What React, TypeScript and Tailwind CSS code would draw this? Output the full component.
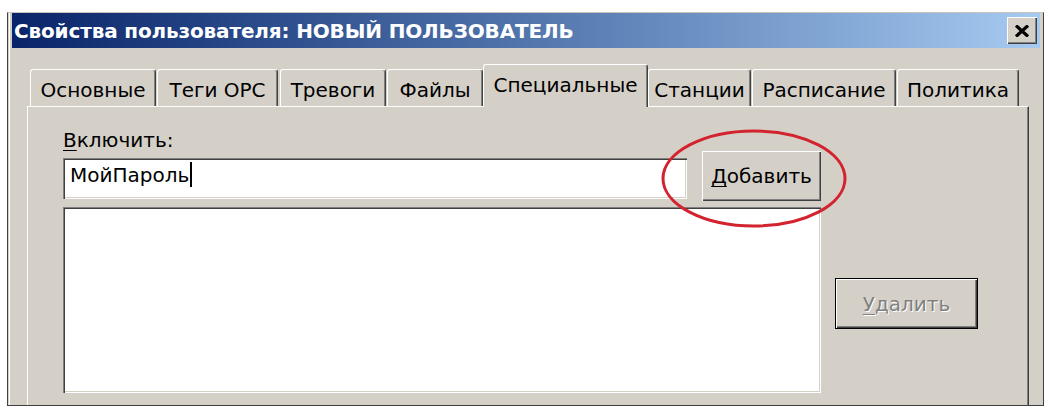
import React from "react";

type TabProps = {
  label: string;
  w: string;
  ml: string;
  active?: boolean;
};

function Tab({ label, w, ml, active }: TabProps) {
  if (active) {
    return (
      <div
        className={`${w} ${ml} relative z-10 -mb-[1px] h-[43px] rounded-t-[3px] border-t border-l border-white border-r border-r-[#404040] bg-[#d4d0c8] pt-[8px] text-center shadow-[inset_-1px_0_0_#808080]`}
      >
        {label}
      </div>
    );
  }
  return (
    <div
      className={`${w} ${ml} h-[37px] rounded-t-[3px] border-t border-l border-white border-r border-r-[#404040] bg-[#d4d0c8] pt-[8px] text-center shadow-[inset_-1px_0_0_#808080]`}
    >
      {label}
    </div>
  );
}

export default function App() {
  return (
    <div className="w-[1052px] h-[412px] bg-white pl-[7px] pt-[12px] font-['DejaVu_Sans',sans-serif] text-[20px] leading-[24px] text-black">
      {/* window */}
      <div className="flex h-[394px] w-[1037px] flex-col border border-[#404040] border-t-[#c8c4bc] bg-[#d4d0c8] shadow-[inset_1px_0_0_#d4d0c8,inset_2px_0_0_#ffffff]">
        {/* title bar */}
        <div className="ml-[4px] flex h-[35px] w-[1028px] items-center justify-between bg-gradient-to-r from-[#0a246a] to-[#a6caf0] pl-[2px] pr-[3px]">
          <span className="text-[20px] font-bold tracking-[-0.15px] text-white">
            Свойства пользователя: НОВЫЙ ПОЛЬЗОВАТЕЛЬ
          </span>
          <div className="flex h-[27px] w-[30px] items-center justify-center bg-[#d4d0c8] shadow-[inset_1px_1px_0_#ffffff,inset_-1px_-1px_0_#404040,inset_-2px_-2px_0_#808080]">
            <svg width="16" height="12" viewBox="0 0 16 12">
              <path d="M2 0.5 L14 11.5 M14 0.5 L2 11.5" stroke="#000" strokeWidth="3.2" />
            </svg>
          </div>
        </div>

        {/* tabs */}
        <div className="flex h-[58px] items-end">
          <Tab label="Основные" w="w-[126px]" ml="ml-[22px]" />
          <Tab label="Теги OPC" w="w-[121px]" ml="ml-[1px]" />
          <Tab label="Тревоги" w="w-[106px]" ml="ml-[2px]" />
          <Tab label="Файлы" w="w-[96px]" ml="ml-[1px]" />
          <Tab label="Специальные" w="w-[165px]" ml="ml-0" active />
          <Tab label="Станции" w="w-[103px]" ml="ml-0" />
          <Tab label="Расписание" w="w-[144px]" ml="ml-[1px]" />
          <Tab label="Политика" w="w-[122px]" ml="ml-[1px]" />
        </div>

        {/* panel */}
        <div className="ml-[19px] w-[1002px] flex-1 border-t border-l border-white border-r border-r-[#404040] pl-[35px] pt-[21px] shadow-[inset_-1px_0_0_#808080]">
          <div className="h-[23px]">
            <span className="underline decoration-1 underline-offset-[3px]">В</span>ключить:
          </div>

          <div className="relative flex h-[50px] items-start">
            <div className="mt-[7px] flex h-[41px] w-[624px] items-start bg-white pl-[7px] pt-[5px] shadow-[inset_1px_1px_0_#808080,inset_2px_2px_0_#404040,inset_-1px_-1px_0_#ffffff,inset_-2px_-2px_0_#d4d0c8]">
              <span>МойПароль</span>
              <span className="ml-[1px] mt-[-1px] h-[25px] w-[2px] bg-black" />
            </div>
            <button className="ml-[15px] flex h-[50px] w-[119px] items-center justify-center bg-[#d4d0c8] shadow-[inset_1px_1px_0_#ffffff,inset_-1px_-1px_0_#404040,inset_-2px_-2px_0_#808080]">
              <span>
                <span className="underline decoration-1 underline-offset-[3px]">Д</span>обавить
              </span>
            </button>
            <svg
              className="pointer-events-none absolute left-[598px] top-[-22px]"
              width="186"
              height="99"
              viewBox="0 0 186 99"
            >
              <ellipse cx="93" cy="49.5" rx="91" ry="47.5" fill="none" stroke="#d2232f" strokeWidth="3" />
            </svg>
          </div>

          <div className="mt-[6px] flex items-start">
            <div className="h-[186px] w-[758px] bg-white shadow-[inset_1px_1px_0_#808080,inset_2px_2px_0_#404040,inset_-1px_-1px_0_#ffffff,inset_-2px_-2px_0_#d4d0c8]" />
            <button className="ml-[14px] mt-[71px] h-[51px] w-[143px] border border-black bg-[#d4d0c8] shadow-[inset_1px_1px_0_#ffffff,inset_-1px_-1px_0_#404040,inset_-2px_-2px_0_#808080]">
              <span className="text-[#808080] [text-shadow:1px_1px_0_#ffffff]">
                <span className="underline decoration-1 underline-offset-[3px]">У</span>далить
              </span>
            </button>
          </div>
        </div>
      </div>
    </div>
  );
}
